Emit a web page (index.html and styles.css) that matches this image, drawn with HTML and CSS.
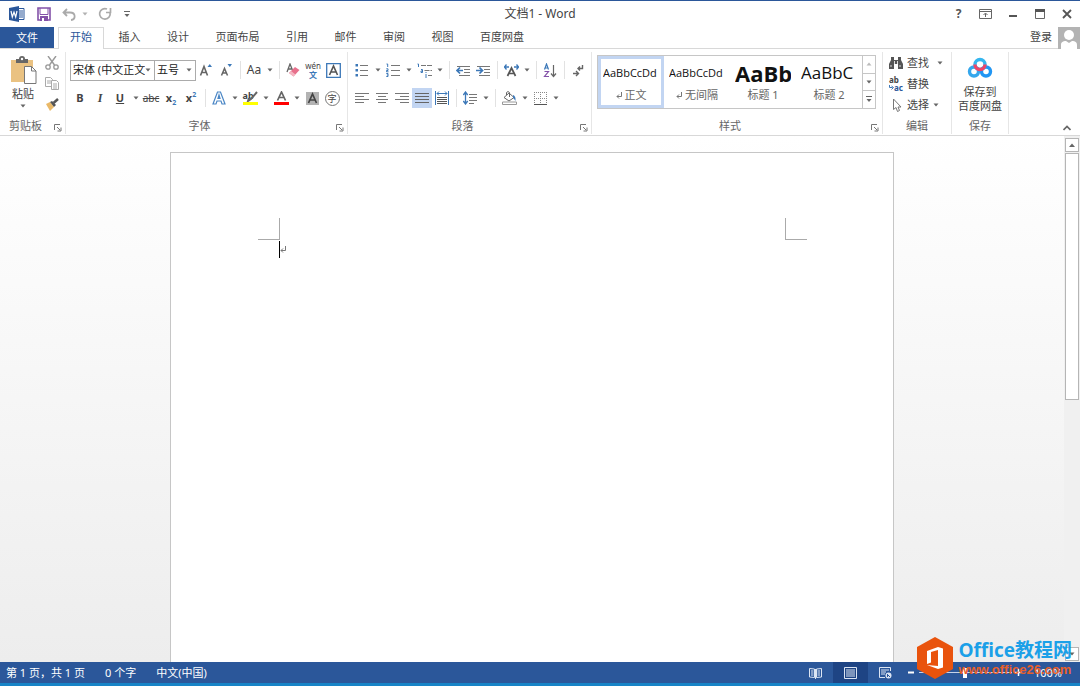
FILE: index.html
```html
<!DOCTYPE html>
<html lang="zh-CN">
<head>
<meta charset="utf-8">
<title>文档1 - Word</title>
<link rel="stylesheet" href="styles.css">
</head>
<body>
<svg class="defs" aria-hidden="true">
  <symbol id="caret" viewBox="0 0 6 4"><path d="M.5.5h5L3 3.5z" fill="#666"/></symbol>
  <symbol id="launch" viewBox="0 0 8 8"><path d="M.5 6V.5H6M3 3l3 3M7 3.5V7H3.500" fill="none" stroke="#777"/></symbol>
  <symbol id="ret" viewBox="0 0 6 7"><path d="M5.500 0v4.500H1M3 2.500l-2 2 2 2" fill="none" stroke="#777"/></symbol>
</svg>

<header class="titlebar">
  <div class="quick">
    <button class="q" aria-label="Word"><svg width="16" height="16"><path d="M8 2.500h7v11H8" fill="#fff" stroke="#2b579a"/><path d="M10 5h4M10 7h4M10 9h4M10 11h4" stroke="#2b579a"/><path d="M0 2l10-2v16L0 14z" fill="#2b579a"/><path d="M2 5l1.300 6L5 6l1.700 5L8 5" fill="none" stroke="#fff" stroke-width="1.200"/></svg></button>
    <button class="q" aria-label="保存"><svg width="14" height="14"><path d="M1 1h12v12H1z" fill="#fff" stroke="#8351a8" stroke-width="1.600"/><path d="M3 7.500h8M3 1v6.500M11 1v6.500" stroke="#8351a8"/><path d="M3 9h8v5H3z" fill="#8351a8"/><path d="M5 11h2v3H5z" fill="#fff"/></svg></button>
    <button class="q q-undo" aria-label="撤消"><svg width="14" height="13"><path d="M5 1L1.500 4.500 5 8M2 4.500h6c6 0 6 7 1 7.500" fill="none" stroke="#aaa" stroke-width="1.800"/></svg></button>
    <button class="q q-caret" aria-label="撤消列表"><svg width="6" height="4" opacity=".5"><use href="#caret"/></svg></button>
    <button class="q q-redo" aria-label="重复"><svg width="14" height="14"><path d="M9 2A5.300 5.300 0 1 0 12 5.500M8 5.500h4.500V1" fill="none" stroke="#aaa" stroke-width="1.700"/></svg></button>
    <button class="q q-more" aria-label="自定义"><svg width="6" height="7"><path d="M0 .5h6" stroke="#666"/><path d="M.5 3h5L3 6z" fill="#666"/></svg></button>
  </div>
  <h1 class="title">文档1 - Word</h1>
  <div class="window">
    <button class="q help" aria-label="帮助">?</button>
    <button class="q" aria-label="功能区显示选项"><svg width="13" height="10"><path d="M.5.5h12v9H.5zM1 2.500h11M6.500 8V4.500M4.500 6l2-2 2 2" fill="none" stroke="#666"/></svg></button>
    <button class="q" aria-label="最小化"><svg width="10" height="10"><path d="M1 7h8" stroke="#555" stroke-width="2"/></svg></button>
    <button class="q" aria-label="最大化"><svg width="10" height="10"><path d="M.5 1h9v8.500h-9z" fill="none" stroke="#666"/><path d="M0 1.500h10" stroke="#555" stroke-width="3"/></svg></button>
    <button class="q" aria-label="关闭"><svg width="10" height="10"><path d="M1 1l8 8M9 1L1 9" stroke="#555" stroke-width="1.800"/></svg></button>
  </div>
</header>

<nav class="tabbar">
  <button class="file">文件</button>
  <div class="tabs">
    <button class="tab active">开始</button><button class="tab">插入</button><button class="tab">设计</button><button class="tab">页面布局</button><button class="tab">引用</button><button class="tab">邮件</button><button class="tab">审阅</button><button class="tab">视图</button><button class="tab">百度网盘</button>
  </div>
  <a class="login" href="#">登录</a>
  <svg class="avatar" width="22" height="22"><path d="M0 0h22v22H0z" fill="#b3b3b3"/><circle cx="11" cy="8" r="5" fill="#fff"/><path d="M3 22v-4c0-3 2-4 5-4l3 2 3-2c3 0 5 1 5 4v4z" fill="#fff"/></svg>
</nav>

<section class="ribbon">
  <div class="group clip">
    <div class="body clip-body">
      <button class="big">
        <svg width="27" height="28"><path d="M1 4h22v22H1z" fill="#eac282"/><path d="M6 3h3a3 3 0 0 1 6 0h3v4H6z" fill="#666"/><circle cx="12" cy="3" r="1.200" fill="#fff"/><path d="M14.500 10.500h7l4.500 4.500v12.500H14.500z" fill="#fff" stroke="#777"/><path d="M21.500 10.500V15H26" fill="none" stroke="#777"/></svg>
        <span>粘贴</span>
        <svg width="6" height="4"><use href="#caret"/></svg>
      </button>
      <div class="stack">
        <button class="ib" aria-label="剪切"><svg width="14" height="14"><path d="M3 0l6.500 9M11 0L4.500 9" stroke="#999" stroke-width="1.400"/><circle cx="3" cy="11" r="2.200" fill="none" stroke="#999" stroke-width="1.300"/><circle cx="11" cy="11" r="2.200" fill="none" stroke="#999" stroke-width="1.300"/></svg></button>
        <button class="ib" aria-label="复制"><svg width="14" height="13"><path d="M.5.5h5l2 2v7h-7zM2 4h4M2 6h4" fill="#fff" stroke="#aaa"/><path d="M6.500 3.500h5l2 2v7h-7zM8 7h4M8 9h4M8 11h4" fill="#fff" stroke="#aaa"/></svg></button>
        <button class="ib" aria-label="格式刷"><svg width="14" height="13"><path d="M1 6l4-2 4 5-4 4z" fill="#eab968"/><path d="M5 4l2-1 4 4-2 2z" fill="#555"/><path d="M8.500 5L13 1" stroke="#555" stroke-width="2.500"/></svg></button>
      </div>
    </div>
    <div class="foot"><span>剪贴板</span><button class="launch" aria-label="剪贴板设置"><svg width="8" height="8"><use href="#launch"/></svg></button></div>
  </div>

  <div class="group font">
    <div class="body">
      <div class="row">
        <label class="combo wide"><select aria-label="字体"><option>宋体 (中文正文)</option></select><svg width="6" height="4"><use href="#caret"/></svg></label>
        <label class="combo"><select aria-label="字号"><option>五号</option></select><svg width="6" height="4"><use href="#caret"/></svg></label>
        <button class="ib" aria-label="增大字号"><svg width="14" height="14"><path d="M1.500 12.500L5 3.500l3.500 9M3 9.500h4" fill="none" stroke="#666" stroke-width="1.600"/><path d="M8.500 4L10.800 1 13 4z" fill="#3c78b8"/></svg></button>
        <button class="ib" aria-label="减小字号"><svg width="14" height="14"><path d="M2.500 12.500L5.500 5.500l3 7M4 10h3" fill="none" stroke="#666" stroke-width="1.500"/><path d="M8.500 1H13l-2.200 3z" fill="#3c78b8"/></svg></button>
        <i class="sep"></i>
        <button class="split"><span class="aa">Aa</span><svg width="6" height="4"><use href="#caret"/></svg></button>
        <i class="sep"></i>
        <button class="ib" aria-label="清除格式"><svg width="14" height="14"><path d="M1 9l3-8 2.500 6M2.500 6h3" fill="none" stroke="#666" stroke-width="1.300"/><path d="M3 10l6-6 4.500 3-6 6.500z" fill="#e8708c"/><path d="M3 10l2-2 4.500 3.500-2 2z" fill="#f4b6c2"/></svg></button>
        <button class="ib pinyin"><span>wén</span><span>文</span></button>
        <button class="ib" aria-label="字符边框"><svg width="15" height="15"><path d="M.7.7h13.600v13.600H.7z" fill="#fff" stroke="#3c78b8" stroke-width="1.300"/><path d="M3.500 12l4-9 4 9M5 9h5" fill="none" stroke="#555" stroke-width="1.600"/></svg></button>
      </div>
      <div class="row">
        <button class="ib bold">B</button>
        <button class="ib ital">I</button>
        <button class="split"><span class="under">U</span><svg width="6" height="4"><use href="#caret"/></svg></button>
        <button class="ib strike">abc</button>
        <button class="ib bold"><span>x<sub>2</sub></span></button>
        <button class="ib bold"><span>x<sup>2</sup></span></button>
        <i class="sep"></i>
        <button class="split" aria-label="文本效果"><svg width="14" height="14"><path d="M1 13L5.500 1h3L13 13h-3l-1-3H5l-1 3zM6 7.500h2L7 4z" fill="#fff" stroke="#4a86c5" stroke-width="1.200"/></svg><svg width="6" height="4"><use href="#caret"/></svg></button>
        <button class="split"><span class="ab">ab<svg width="15" height="14"><path d="M14 1L8 8l-3 2 1-3" fill="none" stroke="#666" stroke-width="2"/><path d="M0 11h15v3H0z" fill="#ff0"/></svg></span><svg width="6" height="4"><use href="#caret"/></svg></button>
        <button class="split" aria-label="字体颜色"><svg width="15" height="14"><path d="M3.500 9.500L7.500 1l4 8.500M5 6.500h5" fill="none" stroke="#666" stroke-width="1.700"/><path d="M0 11h15v3H0z" fill="red"/></svg><svg width="6" height="4"><use href="#caret"/></svg></button>
        <button class="ib" aria-label="字符底纹"><svg width="13" height="13"><path d="M0 0h13v13H0z" fill="#b3b3b3"/><path d="M2.500 11l4-9 4 9M4 8h5" fill="none" stroke="#444" stroke-width="1.700"/></svg></button>
        <button class="ib"><span class="circ">字</span></button>
      </div>
    </div>
    <div class="foot"><span>字体</span><button class="launch" aria-label="字体设置"><svg width="8" height="8"><use href="#launch"/></svg></button></div>
  </div>

  <div class="group para">
    <div class="body">
      <div class="row">
        <button class="split" aria-label="项目符号"><svg width="14" height="14"><path d="M5 2.500h8M5 7.500h8M5 12.500h8" stroke="#777"/><path d="M.5 1h2.500v2.500H.5zM.5 6h2.500v2.500H.5zM.5 11h2.500v2.500H.5z" fill="#3c78b8"/></svg><svg width="6" height="4"><use href="#caret"/></svg></button>
        <button class="split" aria-label="编号"><svg width="14" height="14"><path d="M5 2.500h9M5 7.500h9M5 12.500h9" stroke="#777"/><path d="M.5 1h1.200v3M.3 5.800h1.700v1.700H.5v1.300H2.500M.3 10.500H2v3H.3M.8 12H2" fill="none" stroke="#3c78b8"/></svg><svg width="6" height="4"><use href="#caret"/></svg></button>
        <button class="split" aria-label="多级列表"><svg width="15" height="15"><path d="M4 2.500h11M7.500 7.500H15M11 12.500h4" stroke="#777" stroke-dasharray="5 1"/><path d="M.5 1h1v3M4 6.500h1.500v3H4V8h1.500M9 11v4M9 9v1" fill="none" stroke="#3c78b8"/></svg><svg width="6" height="4"><use href="#caret"/></svg></button>
        <i class="sep"></i>
        <button class="ib" aria-label="减少缩进"><svg width="14" height="11"><path d="M1 1.500h13M8 4.500h6M8 7.500h6M3 10.500h11" stroke="#777"/><path d="M7 5.500H1.500M4 2.500l-3 3 3 3" fill="none" stroke="#3c78b8" stroke-width="1.700"/></svg></button>
        <button class="ib" aria-label="增加缩进"><svg width="14" height="11"><path d="M1 1.500h13M8 4.500h6M8 7.500h6M3 10.500h11" stroke="#777"/><path d="M0 5.500h6M3.500 2.500l3 3-3 3" fill="none" stroke="#3c78b8" stroke-width="1.700"/></svg></button>
        <i class="sep"></i>
        <button class="split" aria-label="中文版式"><svg width="15" height="13"><path d="M3.500 12l4-8 4 8M5 9.500h5" fill="none" stroke="#555" stroke-width="1.700"/><path d="M0 3h5M2.500.5L.5 3l2 2.500M10 3h5M12.500.5l2 2.500-2 2.500" fill="none" stroke="#3c78b8" stroke-width="1.300"/></svg><svg width="6" height="4"><use href="#caret"/></svg></button>
        <i class="sep"></i>
        <button class="ib" aria-label="排序"><svg width="14" height="15"><path d="M1.500 6.500l2-5.500 2 5.500M2 5h3" fill="none" stroke="#3c78b8" stroke-width="1.200"/><path d="M1.500 8.500h4l-4 5h4.500" fill="none" stroke="#8351a8" stroke-width="1.200"/><path d="M10.500 2v11M8 10.500l2.500 3 2.500-3" fill="none" stroke="#666" stroke-width="1.200"/></svg></button>
        <i class="sep"></i>
        <button class="ib" aria-label="显示编辑标记"><svg width="11" height="13"><path d="M9.500 1v3.500H5M7 2.500l-2 2 2 2M0 9.500h5M3 7l2.500 2.500L3 12" fill="none" stroke="#666" stroke-width="1.400"/></svg></button>
      </div>
      <div class="row">
        <button class="ib" aria-label="左对齐"><svg width="14" height="11"><path d="M0 .5h14M0 3.500h9M0 6.500h14M0 9.500h9" stroke="#777"/></svg></button>
        <button class="ib" aria-label="居中"><svg width="14" height="11"><path d="M1 .5h12M3 3.500h8M1 6.500h12M3 9.500h8" stroke="#777"/></svg></button>
        <button class="ib" aria-label="右对齐"><svg width="14" height="11"><path d="M0 .5h14M5 3.500h9M0 6.500h14M5 9.500h9" stroke="#777"/></svg></button>
        <button class="ib on" aria-label="两端对齐"><svg width="14" height="11"><path d="M0 .5h14M0 3.500h14M0 6.500h14M0 9.500h14" stroke="#666"/></svg></button>
        <button class="ib" aria-label="分散对齐"><svg width="14" height="14"><path d="M.5 0v14M13.500 0v14M2 2.500h10M4 .5l-2 2 2 2M10 .5l2 2-2 2" fill="none" stroke="#3c78b8"/><path d="M2 6.500h10M2 8.500h10M2 10.500h10M2 12.500h10" stroke="#555"/></svg></button>
        <i class="sep"></i>
        <button class="split" aria-label="行距"><svg width="14" height="14"><path d="M2.500 1v12M.3 4l2.200-3 2.200 3M.3 10l2.200 3 2.200-3" fill="none" stroke="#3c78b8" stroke-width="1.300"/><path d="M6 3.500h8M6 6.500h8M6 9.500h8M6 12.500h5" stroke="#777"/></svg><svg width="6" height="4"><use href="#caret"/></svg></button>
        <i class="sep"></i>
        <button class="split" aria-label="底纹"><svg width="15" height="14"><path d="M2 6.500L7 2l5 4.500L7 10zM4.500 4V1.500q1.500-2 3 0V6" fill="#fff" stroke="#666"/><path d="M11 4q3 1 2.500 6L11 6.500z" fill="#3c78b8"/><path d="M.5 11h14v2.500H.5z" fill="#fff" stroke="#999"/></svg><svg width="6" height="4"><use href="#caret"/></svg></button>
        <button class="split" aria-label="边框"><svg width="13" height="13"><path d="M.5 0v12M6.500 0v12M12.500 0v12M0 .5h13M0 6.500h13" stroke="#888" stroke-dasharray="1 1"/><path d="M0 12.500h13" stroke="#555"/></svg><svg width="6" height="4"><use href="#caret"/></svg></button>
      </div>
    </div>
    <div class="foot"><span>段落</span><button class="launch" aria-label="段落设置"><svg width="8" height="8"><use href="#launch"/></svg></button></div>
  </div>

  <div class="group styles">
    <div class="body">
      <div class="gallery">
        <button class="style sel"><span class="demo">AaBbCcDd</span><span class="name"><svg width="6" height="7"><use href="#ret"/></svg>正文</span></button>
        <button class="style"><span class="demo">AaBbCcDd</span><span class="name"><svg width="6" height="7"><use href="#ret"/></svg>无间隔</span></button>
        <button class="style"><span class="demo h1">AaBb</span><span class="name">标题 1</span></button>
        <button class="style"><span class="demo h2">AaBbC</span><span class="name">标题 2</span></button>
        <div class="spin">
          <button aria-label="上一行"><svg width="6" height="4" opacity=".5"><path d="M.5 3.500h5L3 .5z" fill="#777"/></svg></button>
          <button aria-label="下一行"><svg width="6" height="4"><use href="#caret"/></svg></button>
          <button aria-label="其他"><svg width="6" height="7"><path d="M0 .5h6" stroke="#666"/><path d="M.5 3h5L3 6z" fill="#666"/></svg></button>
        </div>
      </div>
    </div>
    <div class="foot"><span>样式</span><button class="launch" aria-label="样式设置"><svg width="8" height="8"><use href="#launch"/></svg></button></div>
  </div>

  <div class="group edit">
    <div class="body stack">
      <button class="cmd"><svg width="14" height="13"><path d="M2 1h3v3h4V1h3v3l2 4v5H9V8H5v5H0V8l2-4z" fill="#555"/><path d="M5.500 5v3M8.500 5v3M2 9v2M11 9v2" stroke="#fff" stroke-width=".8"/></svg>查找<svg class="gap" width="6" height="4"><use href="#caret"/></svg></button>
      <button class="cmd"><span class="repl"><span>ab</span><span><svg width="5" height="5"><path d="M.5 0v2.500h3M2.500 1l2 1.500-2 2" fill="none" stroke="#3c78b8"/></svg>ac</span></span>替换</button>
      <button class="cmd"><svg width="14" height="14"><path d="M4.500 1v10.500l2.500-2 1.500 4 2-1-1.500-3.500H12z" fill="#fff" stroke="#777"/></svg>选择<svg width="6" height="4"><use href="#caret"/></svg></button>
    </div>
    <div class="foot"><span>编辑</span></div>
  </div>

  <div class="group save">
    <div class="body">
      <button class="big cloud">
        <svg width="26" height="22"><circle cx="7" cy="14.500" r="4.500" fill="none" stroke="#35a7ec" stroke-width="3.400"/><circle cx="19" cy="14.500" r="4.500" fill="none" stroke="#2196f3" stroke-width="3.400"/><circle cx="13" cy="7.500" r="5" fill="none" stroke="#35b6ef" stroke-width="3.400"/><path d="M8 7.500a5 5 0 0 0 10 0" fill="none" stroke="#ef4668" stroke-width="3.400"/></svg>
        <span>保存到</span><span>百度网盘</span>
      </button>
    </div>
    <div class="foot"><span>保存</span></div>
  </div>
  <button class="collapse" aria-label="折叠功能区"><svg width="8" height="6"><path d="M.5 5L4 1.500 7.500 5" fill="none" stroke="#666" stroke-width="1.700"/></svg></button>
</section>

<main class="work">
  <div class="canvas">
    <article class="page">
      <div class="marks"><i class="mark left"></i><i class="mark right"></i></div>
      <p class="line"><svg width="6" height="7"><use href="#ret"/></svg></p>
    </article>
  </div>
  <div class="scroll">
    <button aria-label="向上"><svg width="6" height="4"><path d="M0 4h6L3 .5z" fill="#666"/></svg></button>
    <div class="track"><div class="thumb"></div></div>
    <button aria-label="向下"><svg width="6" height="4"><use href="#caret"/></svg></button>
  </div>
</main>

<footer class="status">
  <span>第 1 页，共 1 页</span><span>0 个字</span><span>中文(中国)</span>
  <div class="tools">
    <div class="views">
      <button aria-label="阅读视图"><svg width="13" height="12"><path d="M.5 1.500l5 .5v8.500l-5-.5zM12.500 1.500l-5 .5v8.500l5-.5zM2 4h2.500M2 6h2.500M2 8h2.500M8.500 4H11M8.500 6H11M8.500 8H11M6.500 2v10" fill="none" stroke="#dce5f3"/></svg></button>
      <button class="cur" aria-label="页面视图"><svg width="13" height="12"><path d="M.5.5h12v11H.5zM2 3h9M2 5h9M2 7h9M2 9h9" fill="none" stroke="#dce5f3"/></svg></button>
      <button aria-label="Web 版式"><svg width="13" height="12"><path d="M11.500 4V.5H.5v10H6M2 3h8M2 5h5M2 7h4" fill="none" stroke="#dce5f3"/><circle cx="9.500" cy="8.500" r="3" fill="#dce5f3"/><path d="M8 7l3 3M8.500 10V8" stroke="#2b579a"/></svg></button>
    </div>
    <div class="zoom">
      <button aria-label="缩小"><svg width="7" height="7"><path d="M0 3.500h6" stroke="#fff" stroke-width="2"/></svg></button>
      <input type="range" min="0" max="100" value="50" aria-label="显示比例">
      <button aria-label="放大"><svg width="7" height="7"><path d="M0 3.500h7M3.500 0v7" stroke="#fff" stroke-width="1.500"/></svg></button>
      <span>100%</span>
    </div>
  </div>
</footer>

<aside class="badge">
  <svg width="36" height="42"><path d="M18 0l18 10v22L18 42 0 32V10z" fill="#e9530d"/><path d="M10 14l11-4 5 1.500v19L21 32l-11-4 11 1V13l-7 2v10.500L10 27z" fill="#fff"/></svg>
  <div><strong>Office教程网</strong><span>www.office26.com</span></div>
</aside>
</body>
</html>
```
FILE: styles.css
```css
* { box-sizing: border-box; }
body {
  margin: 0; height: 100vh; display: flex; flex-direction: column; position: relative;
  overflow: hidden; border-top: 1px solid #2b579a; background: #fff; color: #444;
  font: 11px/14px "Noto Sans", "Noto Sans CJK SC", sans-serif;
}
button { border: 0; padding: 0; background: none; color: inherit; font: inherit; display: flex; align-items: center; justify-content: center; white-space: nowrap; }
svg { display: block; flex: none; }
.defs { position: absolute; width: 0; height: 0; }

.titlebar { display: grid; grid-template-columns: 1fr auto 1fr; align-items: center; height: 26px; flex: none; }
.quick, .window { display: flex; align-items: center; }
.quick { padding-left: 3px; }
.window { justify-content: flex-end; }
.q { width: 27px; height: 24px; }
.q-undo { width: 24px; }
.q-caret { width: 8px; }
.q-redo { width: 32px; }
.q-more { width: 12px; }
.help { font-size: 12px; font-weight: 700; color: #555; }
.title { margin: 0; font-size: 12px; font-weight: 400; }

.tabbar { display: flex; height: 22px; flex: none; border-bottom: 1px solid #d8d8d8; }
.file { width: 54px; background: #2b579a; color: #fff; margin-right: 4px; }
.tabs { display: flex; justify-content: space-between; width: 478px; }
.tab { padding: 0 12px; height: 20px; }
.tab.active { height: 22px; color: #2b579a; background: #fff; border: 1px solid #d8d8d8; border-bottom: 0; padding: 0 11px 3px; }
.login { margin-left: auto; margin-right: 6px; color: inherit; text-decoration: none; line-height: 20px; }

.ribbon { display: flex; height: 87px; flex: none; border-bottom: 1px solid #d8d8d8; }
.group { display: flex; flex-direction: column; border-right: 1px solid #e6e6e6; margin-top: 3px; margin-bottom: 1px; }
.clip { width: 66px; }
.font { width: 282px; }
.para { width: 244px; }
.styles { width: 291px; }
.edit { width: 69px; }
.save { width: 57px; }
.body { flex: 1; padding: 4px 4px 0; }
.foot { display: flex; align-items: center; height: 16px; color: #666; }
.foot span { flex: 1; text-align: center; }
.launch { width: 14px; height: 16px; padding-top: 4px; }
.row { display: flex; align-items: center; height: 28px; }
.ib { width: 20px; height: 20px; flex: none; }
.split { display: grid; grid-template-columns: 20px 11px; justify-items: center; width: 31px; height: 20px; flex: none; }
.sep { width: 8px; height: 18px; flex: none; background: linear-gradient(#e2e2e2, #e2e2e2) center / 1px 100% no-repeat; }
.on { background: #c2d5f2; }
.big { flex-direction: column; width: 38px; line-height: 14px; }
.clip-body { display: flex; padding-right: 2px; }
.clip-body .big { justify-content: flex-start; gap: 3px; height: 56px; }
.stack { display: flex; flex-direction: column; }
.stack .ib { height: 21px; }
.clip-body .stack { margin: -4px 0 0; }

.combo { display: flex; align-items: center; width: 43px; height: 21px; border: 1px solid #ababab; padding-right: 3px; background: #fff; }
.combo.wide { width: 84px; border-right: 0; }
.combo select { appearance: none; flex: 1; min-width: 0; border: 0; padding: 0 0 0 2px; background: none; color: #222; font: inherit; overflow: hidden; text-overflow: clip; outline: 0; }
.aa { font-size: 12px; }
.pinyin { flex-direction: column; font-size: 8px; line-height: 9px; }
.pinyin span + span { color: #3c78b8; font-weight: 700; }
.bold { font-weight: 700; }
.bold sub, .bold sup { font-size: 7px; line-height: 0; color: #3c78b8; }
.ital { font: italic 700 12px/14px "Liberation Serif", serif; }
.under { font-weight: 700; text-decoration: underline; }
.strike { font-size: 10px; text-decoration: line-through; }
.ab { position: relative; width: 15px; height: 14px; font-size: 9px; line-height: 9px; text-align: left; font-weight: 700; }
.ab svg { position: absolute; left: 0; top: 0; }
.circ { width: 15px; height: 15px; border: 1px solid #777; border-radius: 50%; font-size: 9px; line-height: 13px; text-align: center; }

.gallery { display: flex; height: 54px; border: 1px solid #c6c6c6; margin: -1px 2px 0 1px; }
.style { flex: 1; min-width: 0; flex-direction: column; overflow: hidden; border: 3px solid transparent; }
.style.sel { border-color: #c2d5f2; }
.demo { height: 26px; width: 56px; overflow: hidden; line-height: 26px; color: #111; text-align: left; font-family: "Open Sans", "Noto Sans", sans-serif; }
.h1 { font-size: 22px; font-weight: 700; }
.h2 { font-size: 17px; }
.name { display: flex; align-items: center; gap: 3px; height: 18px; color: #666; }
.spin { width: 13px; display: flex; flex-direction: column; border-left: 1px solid #c6c6c6; }
.spin button { flex: 1; }
.spin button + button { border-top: 1px solid #c6c6c6; }

.edit .stack { padding: 0 0 0 6px; }
.cmd { height: 21px; justify-content: flex-start; gap: 4px; }
.gap { margin-left: 4px; }
.repl { width: 14px; font-size: 8px; line-height: 8px; font-weight: 700; }
.repl > span { display: flex; align-items: center; }
.repl > span + span { color: #2b579a; }
.save .body { padding: 5px 0 0; }
.cloud { width: 100%; }
.cloud svg { margin-bottom: 6px; }
.collapse { margin-left: auto; width: 27px; height: 14px; align-self: flex-end; }

.work { flex: 1; min-height: 0; display: flex; background: linear-gradient(#fff, #ededed); }
.canvas { flex: 1; padding-top: 16px; display: flex; justify-content: center; }
.page { width: 68%; background: #fff; border: 1px solid #c6c6c6; border-bottom: 0; padding: 65px 86px 0 87px; }
.marks { display: flex; justify-content: space-between; }
.mark { width: 22px; height: 22px; border-bottom: 1px solid #aaa; }
.mark.left { border-right: 1px solid #aaa; }
.mark.right { border-left: 1px solid #aaa; }
.line { margin: 1px 0 0 21px; height: 17px; border-left: 1px solid #000; display: flex; align-items: center; }
.scroll { width: 16px; display: flex; flex-direction: column; padding: 2px 1px 1px; gap: 1px; background: #f0f0f0; }
.scroll button { height: 14px; border: 1px solid #b5b5b5; background: #fff; }
.track { flex: 1; }
.thumb { height: 50%; border: 1px solid #b5b5b5; background: #fff; }

.status { display: flex; align-items: center; gap: 20px; height: 24px; flex: none; padding: 0 18px 0 6px; background: #2b579a; border-bottom: 3px solid #1784c7; color: #fff; }
.tools { display: flex; margin-left: auto; align-self: stretch; gap: 4px; }
.views { display: flex; }
.views button { width: 35px; }
.views .cur { background: #1e4484; }
.zoom { display: flex; align-items: center; }
.zoom button { width: 10px; height: 14px; }
.zoom input { appearance: none; width: 93px; height: 12px; margin: 0 2px; background: linear-gradient(#c6d3e8, #c6d3e8) center / 100% 1px no-repeat; }
.zoom input::-webkit-slider-thumb { appearance: none; width: 4px; height: 10px; background: #fff; }
.zoom span { margin-left: 10px; }

.badge { position: absolute; right: 8px; bottom: 7px; display: flex; gap: 5px; }
.badge div { display: flex; flex-direction: column; }
.badge strong { font: 700 19px/26px "Open Sans", "Noto Sans CJK SC", sans-serif; color: #1ba0e8; }
.badge span { font: 700 13px/14px "Liberation Sans", sans-serif; color: #e9602a; }
```
